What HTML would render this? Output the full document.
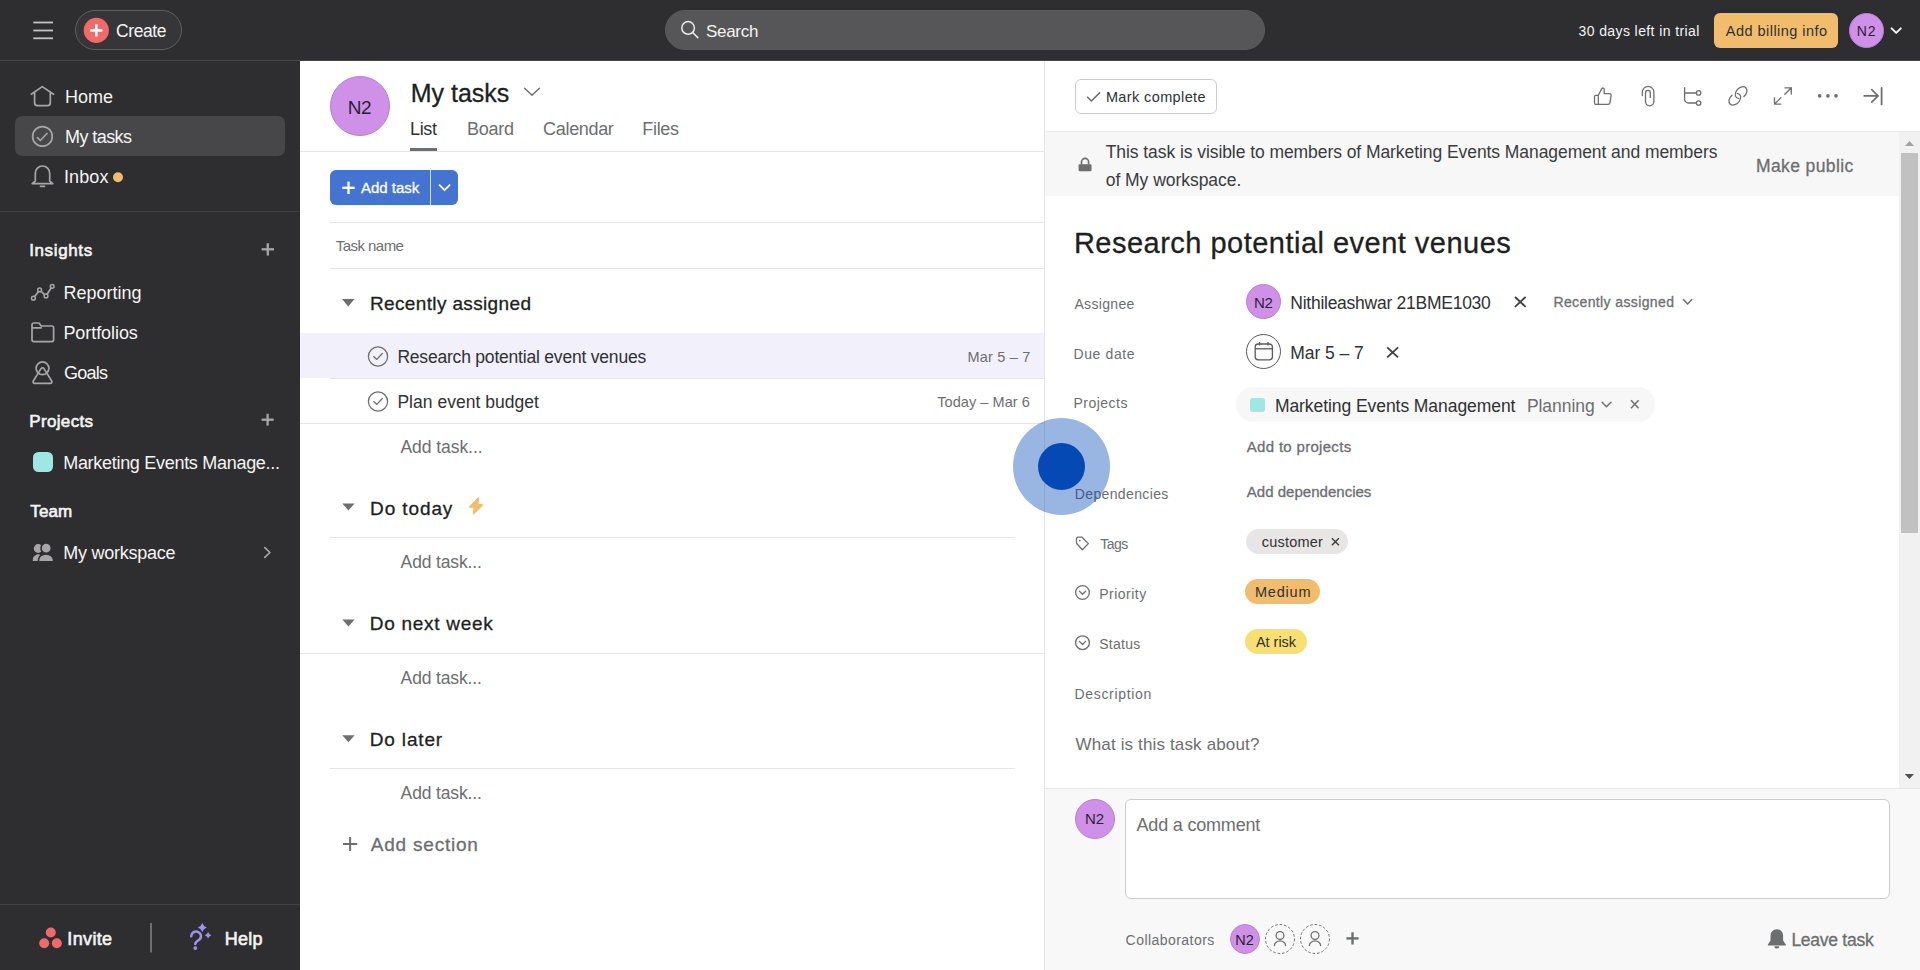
<!DOCTYPE html>
<html><head><meta charset="utf-8">
<style>
*{margin:0;padding:0;box-sizing:border-box}
html,body{width:1920px;height:970px;overflow:hidden;background:#fff;font-family:"Liberation Sans",sans-serif;color:#1e1f21}
.a{position:absolute}
.t{position:absolute;white-space:nowrap;height:30px;line-height:30px}
svg.s{position:absolute;left:0;top:0;overflow:visible}
</style></head><body>
<!-- backgrounds -->
<div class="a" style="left:0;top:0;width:1920px;height:60px;background:#2e2e30"></div>
<div class="a" style="left:0;top:60px;width:1920px;height:1px;background:#48484a"></div>
<div class="a" style="left:0;top:61px;width:300px;height:909px;background:#2e2e30"></div>
<div class="a" style="left:15px;top:116px;width:270px;height:40px;border-radius:7px;background:#474749"></div>
<div class="a" style="left:0;top:210.5px;width:300px;height:1px;background:#434345"></div>
<div class="a" style="left:32.6px;top:451.7px;width:20.7px;height:20.5px;border-radius:5.5px;background:#9ee7e3"></div>
<div class="a" style="left:0;top:904px;width:300px;height:1px;background:#434345"></div>

<!-- top bar shapes -->
<div class="a" style="left:75px;top:10px;width:107px;height:40px;border-radius:20px;border:1px solid #5f5f61;background:#363638"></div>
<div class="a" style="left:665px;top:10px;width:600px;height:40px;border-radius:20px;background:#565557;border:1px solid #5b5b5d"></div>
<div class="a" style="left:1714px;top:13px;width:124px;height:35px;border-radius:6px;background:#f1bd6c"></div>
<div class="a" style="left:1849px;top:13px;width:35px;height:35px;border-radius:50%;background:#cf91e8;border:1px solid #b980d2"></div>

<!-- list pane shapes -->
<div class="a" style="left:330px;top:76px;width:60px;height:60px;border-radius:50%;background:#cf91e8;border:1px solid #b57ccf"></div>
<div class="a" style="left:410px;top:148px;width:27px;height:3px;background:#6d6e6f"></div>
<div class="a" style="left:300px;top:151px;width:744px;height:1px;background:#e6e6e6"></div>
<div class="a" style="left:330px;top:170px;width:128px;height:35px;border-radius:6px;background:#4573d2"></div>
<div class="a" style="left:430px;top:170px;width:1px;height:35px;background:#d5def3"></div>
<div class="a" style="left:330px;top:222px;width:714px;height:1px;background:#e6e6e6"></div>
<div class="a" style="left:330px;top:268px;width:714px;height:1px;background:#e6e6e6"></div>
<div class="a" style="left:300px;top:333px;width:744px;height:45px;background:#f1f0fb"></div>
<div class="a" style="left:330px;top:378px;width:714px;height:1px;background:#e6e6e6"></div>
<div class="a" style="left:300px;top:423px;width:744px;height:1px;background:#e6e6e6"></div>
<div class="a" style="left:330px;top:537px;width:685px;height:1px;background:#e6e6e6"></div>
<div class="a" style="left:300px;top:653px;width:744px;height:1px;background:#e6e6e6"></div>
<div class="a" style="left:330px;top:768px;width:685px;height:1px;background:#e6e6e6"></div>

<!-- detail pane shapes -->
<div class="a" style="left:1044px;top:61px;width:1px;height:909px;background:#e6e6e6"></div>
<div class="a" style="left:1075px;top:79px;width:142px;height:35px;border-radius:6px;border:1px solid #cfcbcb"></div>
<div class="a" style="left:1045px;top:131px;width:875px;height:1px;background:#e6e6e6"></div>
<div class="a" style="left:1045px;top:132px;width:854px;height:64px;background:#f7f7f7"></div>
<div class="a" style="left:1899px;top:132px;width:21px;height:656px;background:#f1f1f1"></div>
<div class="a" style="left:1901px;top:153px;width:17px;height:380px;background:#c1c1c1"></div>
<div class="a" style="left:1246px;top:284px;width:35px;height:35px;border-radius:50%;background:#cf91e8;border:1px solid #b980d2"></div>
<div class="a" style="left:1246px;top:334px;width:35px;height:35px;border-radius:50%;border:1px solid #58595b"></div>
<div class="a" style="left:1235.5px;top:387px;width:419px;height:34.5px;border-radius:17px;background:#f7f7f7"></div>
<div class="a" style="left:1250px;top:397.5px;width:15px;height:14.5px;border-radius:3px;background:#9ee7e3"></div>
<div class="a" style="left:1246px;top:529px;width:101.5px;height:25px;border-radius:12.5px;background:#e8e5e5"></div>
<div class="a" style="left:1245px;top:579.3px;width:75px;height:24.5px;border-radius:12.5px;background:#f1bd6c"></div>
<div class="a" style="left:1245px;top:629.2px;width:62px;height:24.5px;border-radius:12.5px;background:#f8df72"></div>
<div class="a" style="left:1045px;top:788px;width:875px;height:1px;background:#e6e6e6"></div>
<div class="a" style="left:1045px;top:789px;width:875px;height:181px;background:#f8f8f8"></div>
<div class="a" style="left:1075px;top:799px;width:40px;height:40px;border-radius:50%;background:#cf91e8;border:1px solid #b980d2"></div>
<div class="a" style="left:1125px;top:799px;width:765px;height:100px;border-radius:6px;border:1px solid #cfcbcb;background:#fff"></div>
<div class="a" style="left:1230px;top:924px;width:30px;height:30px;border-radius:50%;background:#cf91e8;border:1px solid #b980d2"></div>

<div class="t" id="create" style="left:116.00px;top:16.01px;font-size:17.5px;color:#f5f4f3;letter-spacing:-0.400px">Create</div>
<div class="t" id="search" style="left:705.91px;top:16.90px;font-size:17px;color:#f5f4f3;letter-spacing:-0.260px">Search</div>
<div class="t" id="trial" style="left:1578.50px;top:16.00px;font-size:14px;color:#f5f4f3;letter-spacing:0.400px">30 days left in trial</div>
<div class="t" id="billing" style="left:1725.81px;top:16.01px;font-size:14.5px;color:#303133;letter-spacing:0.467px">Add billing info</div>
<div class="t" id="avtop" style="left:1856.81px;top:16.00px;font-size:14px;color:#2a1f33;letter-spacing:0.800px">N2</div>
<div class="t" id="home" style="left:65.00px;top:82.22px;font-size:18px;color:#f5f4f3;letter-spacing:0.000px">Home</div>
<div class="t" id="mytasks" style="left:65.00px;top:121.51px;font-size:18px;color:#f5f4f3;letter-spacing:-0.571px">My tasks</div>
<div class="t" id="inbox" style="left:64.00px;top:161.90px;font-size:18px;color:#f5f4f3;letter-spacing:0.100px">Inbox</div>
<div class="t" id="insights" style="left:29.20px;top:236.41px;font-size:17px;font-weight:normal;-webkit-text-stroke:0.6px currentColor;color:#f5f4f3;letter-spacing:0.629px">Insights</div>
<div class="t" id="reporting" style="left:63.41px;top:277.51px;font-size:18px;color:#f5f4f3;letter-spacing:0.000px">Reporting</div>
<div class="t" id="portfolios" style="left:63.41px;top:318.01px;font-size:18px;color:#f5f4f3;letter-spacing:-0.067px">Portfolios</div>
<div class="t" id="goals" style="left:63.91px;top:358.31px;font-size:18px;color:#f5f4f3;letter-spacing:-0.725px">Goals</div>
<div class="t" id="projects" style="left:29.20px;top:407.20px;font-size:17px;font-weight:normal;-webkit-text-stroke:0.6px currentColor;color:#f5f4f3;letter-spacing:0.357px">Projects</div>
<div class="t" id="mem" style="left:63.20px;top:447.72px;font-size:18px;color:#f5f4f3;letter-spacing:-0.292px">Marketing Events Manage...</div>
<div class="t" id="team" style="left:30.31px;top:496.51px;font-size:17px;font-weight:normal;-webkit-text-stroke:0.6px currentColor;color:#f5f4f3;letter-spacing:0.100px">Team</div>
<div class="t" id="workspace" style="left:63.20px;top:537.61px;font-size:18px;color:#f5f4f3;letter-spacing:-0.255px">My workspace</div>
<div class="t" id="invite" style="left:67.31px;top:924.01px;font-size:18px;font-weight:normal;-webkit-text-stroke:0.6px currentColor;color:#f5f4f3;letter-spacing:0.360px">Invite</div>
<div class="t" id="help" style="left:224.81px;top:924.01px;font-size:18px;font-weight:normal;-webkit-text-stroke:0.6px currentColor;color:#f5f4f3;letter-spacing:0.267px">Help</div>
<div class="t" id="avbig" style="left:347.81px;top:92.71px;font-size:19px;color:#2a1f33;letter-spacing:-0.400px">N2</div>
<div class="t" id="title" style="left:410.70px;top:78.00px;font-size:25px;font-weight:normal;-webkit-text-stroke:0.3px currentColor;color:#1e1f21;letter-spacing:0.000px">My tasks</div>
<div class="t" id="tlist" style="left:410.00px;top:114.01px;font-size:18px;color:#303133;letter-spacing:-0.333px">List</div>
<div class="t" id="tboard" style="left:467.00px;top:114.01px;font-size:18px;color:#6d6e6f;letter-spacing:-0.250px">Board</div>
<div class="t" id="tcal" style="left:543.11px;top:114.01px;font-size:18px;color:#6d6e6f;letter-spacing:-0.329px">Calendar</div>
<div class="t" id="tfiles" style="left:642.31px;top:114.01px;font-size:18px;color:#6d6e6f;letter-spacing:-0.325px">Files</div>
<div class="t" id="addbtn" style="left:361.00px;top:173.00px;font-size:15px;font-weight:normal;-webkit-text-stroke:0.3px currentColor;color:#ffffff;letter-spacing:0.000px">Add task</div>
<div class="t" id="taskname" style="left:335.81px;top:231.10px;font-size:15px;color:#6d6e6f;letter-spacing:-0.550px">Task name</div>
<div class="t" id="sec1" style="left:370.00px;top:288.51px;font-size:19px;font-weight:normal;-webkit-text-stroke:0.3px currentColor;color:#1e1f21;letter-spacing:0.356px">Recently assigned</div>
<div class="t" id="row1" style="left:397.41px;top:341.80px;font-size:17.5px;color:#303133;letter-spacing:-0.203px">Research potential event venues</div>
<div class="t" id="date1" style="left:967.61px;top:341.81px;font-size:14.5px;color:#6d6e6f;letter-spacing:0.175px">Mar 5 – 7</div>
<div class="t" id="row2" style="left:397.41px;top:387.01px;font-size:17.5px;color:#303133;letter-spacing:0.025px">Plan event budget</div>
<div class="t" id="date2" style="left:937.31px;top:386.61px;font-size:14.5px;color:#6d6e6f;letter-spacing:0.058px">Today – Mar 6</div>
<div class="t" id="at1" style="left:400.50px;top:432.01px;font-size:17.5px;color:#6d6e6f;letter-spacing:-0.060px">Add task...</div>
<div class="t" id="sec2" style="left:370.11px;top:493.71px;font-size:19px;font-weight:normal;-webkit-text-stroke:0.3px currentColor;color:#1e1f21;letter-spacing:0.886px">Do today</div>
<div class="t" id="at2" style="left:400.61px;top:547.01px;font-size:17.5px;color:#6d6e6f;letter-spacing:-0.140px">Add task...</div>
<div class="t" id="sec3" style="left:369.81px;top:608.51px;font-size:19px;font-weight:normal;-webkit-text-stroke:0.3px currentColor;color:#1e1f21;letter-spacing:0.709px">Do next week</div>
<div class="t" id="at3" style="left:400.61px;top:662.51px;font-size:17.5px;color:#6d6e6f;letter-spacing:-0.140px">Add task...</div>
<div class="t" id="sec4" style="left:369.81px;top:725.01px;font-size:19px;font-weight:normal;-webkit-text-stroke:0.3px currentColor;color:#1e1f21;letter-spacing:0.829px">Do later</div>
<div class="t" id="at4" style="left:400.61px;top:778.30px;font-size:17.5px;color:#6d6e6f;letter-spacing:-0.140px">Add task...</div>
<div class="t" id="addsec" style="left:370.81px;top:829.71px;font-size:19px;font-weight:normal;-webkit-text-stroke:0.3px currentColor;color:#6d6e6f;letter-spacing:0.780px">Add section</div>
<div class="t" id="markc" style="left:1105.91px;top:81.90px;font-size:14.5px;color:#303133;letter-spacing:0.383px">Mark complete</div>
<div class="t" id="ban1" style="left:1105.70px;top:137.01px;font-size:17.5px;color:#3a3b3d;letter-spacing:-0.067px">This task is visible to members of Marketing Events Management and members</div>
<div class="t" id="ban2" style="left:1105.70px;top:164.80px;font-size:17.5px;color:#3a3b3d;letter-spacing:-0.033px">of My workspace.</div>
<div class="t" id="makepub" style="left:1755.91px;top:150.71px;font-size:17.5px;font-weight:normal;-webkit-text-stroke:0.3px currentColor;color:#6d6e6f;letter-spacing:0.400px">Make public</div>
<div class="t" id="dtitle" style="left:1073.91px;top:228.01px;font-size:29px;font-weight:normal;-webkit-text-stroke:0.3px currentColor;color:#1e1f21;letter-spacing:0.483px">Research potential event venues</div>
<div class="t" id="lassignee" style="left:1074.41px;top:288.91px;font-size:14px;color:#6d6e6f;letter-spacing:0.343px">Assignee</div>
<div class="t" id="avassign" style="left:1253.90px;top:287.81px;font-size:15px;color:#2a1f33;letter-spacing:-0.200px">N2</div>
<div class="t" id="aname" style="left:1290.31px;top:287.71px;font-size:17.5px;color:#303133;letter-spacing:-0.259px">Nithileashwar 21BME1030</div>
<div class="t" id="recent" style="left:1553.41px;top:286.91px;font-size:14px;font-weight:normal;-webkit-text-stroke:0.3px currentColor;color:#6d6e6f;letter-spacing:0.387px">Recently assigned</div>
<div class="t" id="ldue" style="left:1073.41px;top:338.60px;font-size:14px;color:#6d6e6f;letter-spacing:0.629px">Due date</div>
<div class="t" id="due" style="left:1290.31px;top:337.80px;font-size:17.5px;color:#303133;letter-spacing:-0.075px">Mar 5 – 7</div>
<div class="t" id="lproj" style="left:1073.41px;top:388.41px;font-size:14px;color:#6d6e6f;letter-spacing:0.486px">Projects</div>
<div class="t" id="proj" style="left:1274.91px;top:390.80px;font-size:17.5px;color:#303133;letter-spacing:-0.065px">Marketing Events Management</div>
<div class="t" id="planning" style="left:1526.91px;top:390.80px;font-size:17.5px;color:#6d6e6f;letter-spacing:-0.057px">Planning</div>
<div class="t" id="addproj" style="left:1246.81px;top:432.10px;font-size:15px;font-weight:normal;-webkit-text-stroke:0.3px currentColor;color:#6d6e6f;letter-spacing:0.307px">Add to projects</div>
<div class="t" id="ldep" style="left:1074.81px;top:479.00px;font-size:14px;color:#6d6e6f;letter-spacing:0.364px">Dependencies</div>
<div class="t" id="adddep" style="left:1246.81px;top:476.91px;font-size:15px;font-weight:normal;-webkit-text-stroke:0.3px currentColor;color:#6d6e6f;letter-spacing:0.020px">Add dependencies</div>
<div class="t" id="ltags" style="left:1100.20px;top:528.71px;font-size:14px;color:#6d6e6f;letter-spacing:-0.467px">Tags</div>
<div class="t" id="customer" style="left:1261.81px;top:527.31px;font-size:14.5px;color:#303133;letter-spacing:0.186px">customer</div>
<div class="t" id="lprio" style="left:1099.20px;top:578.60px;font-size:14px;color:#6d6e6f;letter-spacing:0.486px">Priority</div>
<div class="t" id="medium" style="left:1254.91px;top:576.90px;font-size:14.5px;color:#303133;letter-spacing:0.820px">Medium</div>
<div class="t" id="lstatus" style="left:1099.20px;top:628.60px;font-size:14px;color:#6d6e6f;letter-spacing:0.280px">Status</div>
<div class="t" id="atrisk" style="left:1255.91px;top:626.81px;font-size:14.5px;color:#303133;letter-spacing:-0.017px">At risk</div>
<div class="t" id="ldesc" style="left:1074.50px;top:678.60px;font-size:14px;color:#6d6e6f;letter-spacing:0.670px">Description</div>
<div class="t" id="whatis" style="left:1075.50px;top:729.61px;font-size:17px;color:#6d6e6f;letter-spacing:0.148px">What is this task about?</div>
<div class="t" id="avcomment" style="left:1085.00px;top:804.41px;font-size:15px;color:#2a1f33;letter-spacing:0.000px">N2</div>
<div class="t" id="addcomment" style="left:1136.50px;top:809.61px;font-size:18px;color:#6d6e6f;letter-spacing:-0.187px">Add a comment</div>
<div class="t" id="collab" style="left:1125.61px;top:924.50px;font-size:14px;color:#6d6e6f;letter-spacing:0.450px">Collaborators</div>
<div class="t" id="avcollab" style="left:1235.20px;top:924.50px;font-size:14.5px;color:#2a1f33;letter-spacing:0.000px">N2</div>
<div class="t" id="leave" style="left:1791.41px;top:924.91px;font-size:17.5px;font-weight:normal;-webkit-text-stroke:0.3px currentColor;color:#6d6e6f;letter-spacing:-0.267px">Leave task</div>

<svg class="s" width="1920" height="970" viewBox="0 0 1920 970">
 <!-- hamburger -->
 <g stroke="#c4c4c4" stroke-width="1.8" stroke-linecap="butt"><line x1="33.3" y1="22.5" x2="53" y2="22.5"/><line x1="33.3" y1="30.5" x2="53" y2="30.5"/><line x1="33.3" y1="38.3" x2="53" y2="38.3"/></g>
 <!-- create plus -->
 <circle cx="96.3" cy="30.4" r="12.6" fill="#f06a6a"/>
 <g stroke="#fff" stroke-width="2.6"><line x1="96.3" y1="24.3" x2="96.3" y2="36.5"/><line x1="90.2" y1="30.4" x2="102.4" y2="30.4"/></g>
 <!-- search icon -->
 <g stroke="#ececec" stroke-width="1.5" fill="none" stroke-linecap="round"><circle cx="688.1" cy="27.9" r="6.3"/><line x1="692.7" y1="32.5" x2="697.8" y2="37.6"/></g>
 <!-- top chevron -->
 <polyline points="1891.6,28.4 1896.2,32.9 1900.8,28.4" stroke="#f5f4f3" stroke-width="2" fill="none" stroke-linecap="round" stroke-linejoin="round"/>

 <!-- sidebar icons -->
 <g stroke="#a7a5a7" stroke-width="1.7" fill="none" stroke-linecap="round" stroke-linejoin="round">
  <path d="M31.3 94.2 L42.2 86.6 L53.6 94.2 M34.6 91.8 V102.7 a3 3 0 0 0 3 3 H47.3 a3 3 0 0 0 3 -3 V91.8"/>
  <circle cx="42.45" cy="136.4" r="9.8"/>
  <polyline points="37.4,137.7 40.3,140.5 47,133.5"/>
  <path d="M35.3 181 V173.5 a7.2 7.5 0 0 1 14.4 0 V181 L52.8 183.6 H32.2 Z"/>
  <path d="M40.5 186.3 H44.5"/>
  <path d="M34.5 296.7 L38.5 291.4 M41 291.3 L44.6 294.7 M47.1 294.3 L51.1 288"/>
  <path d="M32 324.8 a1.8 1.8 0 0 1 1.8 -1.8 H39 L41.2 326 H51.8 a1.8 1.8 0 0 1 1.8 1.8 V339.8 a1.8 1.8 0 0 1 -1.8 1.8 H33.8 a1.8 1.8 0 0 1 -1.8 -1.8 Z M32 327.8 H41.2"/>
  <circle cx="42.5" cy="368.3" r="6.4"/>
  <path d="M41 368.6 a1.8 1.8 0 0 1 3 0 L51.7 381 a1.5 1.5 0 0 1 -1.3 2.3 H34.6 a1.5 1.5 0 0 1 -1.3 -2.3 Z"/>
 </g>
 <g stroke="#a7a5a7" stroke-width="1.5" fill="#2e2e30"><circle cx="33.4" cy="298.2" r="1.9"/><circle cx="39.6" cy="289.9" r="1.9"/><circle cx="46" cy="296" r="1.9"/><circle cx="52.2" cy="286.3" r="1.9"/></g>
 <g stroke="#a7a5a7" stroke-width="2.3" stroke-linecap="butt"><line x1="267.8" y1="243.2" x2="267.8" y2="255.5"/><line x1="261.6" y1="249.3" x2="274" y2="249.3"/><line x1="267.6" y1="413.8" x2="267.6" y2="425.6"/><line x1="261.6" y1="419.7" x2="273.7" y2="419.7"/></g>
 <!-- workspace icon -->
 <g fill="#a7a5a7">
  <circle cx="38.2" cy="548.5" r="4.4"/>
  <path d="M32.8 561 V559 a6 5 0 0 1 7 -4.6 V561 Z"/>
 </g>
 <g fill="#a7a5a7" stroke="#2e2e30" stroke-width="1.6">
  <circle cx="46.2" cy="548.2" r="5.2"/>
  <path d="M38.5 561.8 V560 a7.3 6 0 0 1 15 0 V561.8 Z"/>
 </g>
 <polyline points="264.8,547.6 269.9,552.5 264.8,557.4" stroke="#a7a5a7" stroke-width="1.7" fill="none" stroke-linecap="round" stroke-linejoin="round"/>
 <circle cx="118" cy="177.2" r="5" fill="#f1bd6c"/>
 <!-- invite / help -->
 <g fill="#f06a6a"><circle cx="50.8" cy="932.5" r="5"/><circle cx="44.2" cy="943.3" r="5"/><circle cx="56.8" cy="943.3" r="5"/></g>
 <rect x="150" y="923" width="2" height="29.5" fill="#6f6f71"/>
 <g fill="none" stroke="#9f92f2" stroke-width="2.5" stroke-linecap="round"><path d="M191.2 936.2 a4.9 4.6 0 1 1 8.6 3 c-1.7 1.4 -4.5 2.6 -4.5 4.7"/></g>
 <g fill="#9f92f2"><circle cx="195.3" cy="948.1" r="1.9"/>
  <path d="M202.3 923 Q203.4 926.4 206.8 927.5 Q203.4 928.6 202.3 932 Q201.2 928.6 197.8 927.5 Q201.2 926.4 202.3 923 Z"/>
  <path d="M208.1 931.9 Q208.9 934.4 211.4 935.2 Q208.9 936 208.1 938.5 Q207.3 936 204.8 935.2 Q207.3 934.4 208.1 931.9 Z"/>
 </g>

 <!-- list pane icons -->
 <polyline points="524.6,88.2 532,95.2 539.4,88.2" stroke="#6d6e6f" stroke-width="1.5" fill="none" stroke-linecap="round" stroke-linejoin="round"/>
 <g stroke="#fff" stroke-width="2.3"><line x1="348.5" y1="181.6" x2="348.5" y2="194"/><line x1="342.3" y1="187.8" x2="354.7" y2="187.8"/></g>
 <polyline points="439.6,185.2 444.6,190.2 449.6,185.2" stroke="#fff" stroke-width="1.8" fill="none" stroke-linecap="round" stroke-linejoin="round"/>
 <g fill="#6d6e6f">
  <polygon points="342,299 354.5,299 348.25,306.5"/>
  <polygon points="342.3,503.4 354.6,503.4 348.45,510.4"/>
  <polygon points="342.3,619.6 354.6,619.6 348.45,626.6"/>
  <polygon points="342.3,735.2 354.6,735.2 348.45,742.2"/>
 </g>
 <g stroke="#6d6e6f" stroke-width="1.3" fill="none" stroke-linecap="round" stroke-linejoin="round">
  <circle cx="378" cy="356.5" r="9.6"/><polyline points="373.7,356.6 376.8,359.4 382.3,353.5"/>
  <circle cx="378" cy="401.5" r="9.6"/><polyline points="373.7,401.6 376.8,404.4 382.3,398.5"/>
 </g>
 <path d="M478.4 498 L469.9 506.8 L474.4 507.2 L473.6 513.4 L482.2 505.2 L477.6 504.6 Z" fill="#f1bd6c" stroke="#f1bd6c" stroke-width="1.7" stroke-linejoin="round"/>
 <g stroke="#6d6e6f" stroke-width="2"><line x1="350.1" y1="837" x2="350.1" y2="851"/><line x1="343" y1="844" x2="357.2" y2="844"/></g>

 <!-- detail header icons -->
 <polyline points="1087.6,97.2 1091.4,101 1099.6,92.9" stroke="#6d6e6f" stroke-width="1.6" fill="none" stroke-linecap="round" stroke-linejoin="round"/>
 <g stroke="#6d6e6f" stroke-width="1.3" fill="none" stroke-linecap="round" stroke-linejoin="round">
  <path d="M1598.3 95.3 H1595.7 a1.2 1.2 0 0 0 -1.2 1.2 V103.1 a1.2 1.2 0 0 0 1.2 1.2 H1598.3 Z"/>
  <path d="M1598.3 95.3 L1601.8 88.6 a1.3 1.3 0 0 1 2.4 0.6 V93.6 H1609.4 a1.7 1.7 0 0 1 1.7 1.9 L1610 102.6 a1.9 1.9 0 0 1 -1.9 1.7 H1598.3"/>
  <path d="M1642.3 95.5 V92.2 a5.8 5.8 0 0 1 11.6 0 V101.6 a4.2 4.2 0 0 1 -8.4 0 V92.8 a2.4 2.4 0 0 1 4.8 0 V97.4"/>
  <path d="M1684.6 87.6 V99.2 a3.8 3.8 0 0 0 3.8 3.8 H1696.4 M1684.6 93 H1696.4"/>
  <circle cx="1698.6" cy="92.9" r="2.2"/><circle cx="1698.6" cy="103" r="2.2"/>
  <path d="M1785 87.8 H1791.3 V94.1 M1791.3 87.8 L1784.8 94.3 M1774.5 97.8 V104.1 H1780.8 M1774.5 104.1 L1781 97.6"/>
 </g>
 <g stroke="#6d6e6f" stroke-width="1.3" fill="none" stroke-linecap="round">
  <path d="M1738.63 98.46 A6.8 4.8 -45 1 1 1743.88 96.55"/>
  <path d="M1737.27 93.34 A6.8 4.8 -45 1 1 1732.02 95.25"/>
 </g>
 <path d="M1864.2 95.9 H1878.2 M1871.8 89.7 L1878 95.9 L1871.8 102.2" stroke="#6d6e6f" stroke-width="1.7" fill="none" stroke-linecap="round" stroke-linejoin="round"/>
 <line x1="1881.6" y1="88" x2="1881.6" y2="104.4" stroke="#6d6e6f" stroke-width="1.8" stroke-linecap="round"/>
 <g fill="#6d6e6f"><circle cx="1819.7" cy="95.9" r="1.8"/><circle cx="1827.9" cy="95.9" r="1.8"/><circle cx="1836" cy="95.9" r="1.8"/></g>
 <!-- lock -->
 <path d="M1081.5 164.5 V162 a3.55 3.55 0 0 1 7.1 0 V164.5" stroke="#6d6e6f" stroke-width="1.7" fill="none"/>
 <rect x="1078.6" y="164.3" width="12.9" height="7" rx="1" fill="#6d6e6f"/>
 <!-- scroll arrows -->
 <polygon points="1905,146 1914,146 1909.5,141" fill="#a3a3a3"/>
 <polygon points="1904.8,774 1914,774 1909.4,779" fill="#505050"/>
 <!-- assignee X -->
 <g stroke="#3d3e40" stroke-width="1.8"><line x1="1515" y1="297" x2="1525.6" y2="306.8"/><line x1="1525.6" y1="297" x2="1515" y2="306.8"/>
  <line x1="1387.2" y1="347.3" x2="1398.1" y2="357.3"/><line x1="1398.1" y1="347.3" x2="1387.2" y2="357.3"/></g>
 <polyline points="1683.4,299.5 1687.6,303.9 1691.8,299.5" stroke="#6d6e6f" stroke-width="1.5" fill="none" stroke-linecap="round" stroke-linejoin="round"/>
 <!-- calendar icon -->
 <g stroke="#58595b" stroke-width="1.3" fill="none">
  <rect x="1255.2" y="344" width="17.2" height="15.8" rx="3"/>
  <line x1="1255.2" y1="348.8" x2="1272.4" y2="348.8"/>
  <line x1="1259.6" y1="342" x2="1259.6" y2="345.5"/><line x1="1268" y1="342" x2="1268" y2="345.5"/>
 </g>
 <polyline points="1602.1,402.2 1606.5,406.8 1610.9,402.2" stroke="#6d6e6f" stroke-width="1.5" fill="none" stroke-linecap="round" stroke-linejoin="round"/>
 <g stroke="#6d6e6f" stroke-width="1.5"><line x1="1631" y1="400.3" x2="1638.6" y2="408.3"/><line x1="1638.6" y1="400.3" x2="1631" y2="408.3"/></g>
 <!-- tag icon -->
 <path d="M1076.5 538.8 a1.6 1.6 0 0 1 1.6 -1.6 H1082 L1088.4 543.6 L1082.3 549.7 L1076.5 543.2 Z" stroke="#6d6e6f" stroke-width="1.3" fill="none" stroke-linejoin="round"/>
 <circle cx="1079.8" cy="540.6" r="0.9" fill="#6d6e6f"/>
 <g stroke="#3d3e40" stroke-width="1.4"><line x1="1331.9" y1="538.3" x2="1338.9" y2="545.3"/><line x1="1338.9" y1="538.3" x2="1331.9" y2="545.3"/></g>
 <g stroke="#6d6e6f" stroke-width="1.3" fill="none" stroke-linecap="round" stroke-linejoin="round">
  <circle cx="1082.5" cy="592.5" r="6.9"/><polyline points="1079.4,591.2 1082.5,594.3 1085.6,591.2"/>
  <circle cx="1082.5" cy="642.7" r="6.9"/><polyline points="1079.4,641.4 1082.5,644.5 1085.6,641.4"/>
 </g>
 <!-- collaborators -->
 <g stroke="#6d6e6f" stroke-width="1" fill="none" stroke-dasharray="2.6 1.9"><circle cx="1280" cy="939" r="14.5"/><circle cx="1315" cy="939" r="14.5"/></g>
 <g stroke="#6d6e6f" stroke-width="1.3" fill="none" stroke-linecap="round">
  <circle cx="1280" cy="935.5" r="3.9"/><path d="M1274.4 945.6 a5.6 4.8 0 0 1 11.2 0"/>
  <circle cx="1315" cy="935.5" r="3.9"/><path d="M1309.4 945.6 a5.6 4.8 0 0 1 11.2 0"/>
 </g>
 <g stroke="#6d6e6f" stroke-width="2.4"><line x1="1352.5" y1="932.3" x2="1352.5" y2="944.5"/><line x1="1346.4" y1="938.4" x2="1358.6" y2="938.4"/></g>
 <path d="M1776.8 929.2 a6.3 6.3 0 0 0 -6.3 6.3 V940.6 L1767.9 944.4 a0.8 0.8 0 0 0 0.7 1.2 H1785.1 a0.8 0.8 0 0 0 0.7 -1.2 L1783.1 940.6 V935.5 a6.3 6.3 0 0 0 -6.3 -6.3 Z" fill="#6d6e6f"/>
 <path d="M1774.3 946.2 H1779.4 a2.55 2.4 0 0 1 -5.1 0 Z" fill="#6d6e6f"/>
</svg>

<!-- click indicator -->
<div class="a" style="left:1013px;top:418px;width:97px;height:97px;border-radius:50%;background:rgba(0,71,180,0.4)"></div>
<div class="a" style="left:1038px;top:443px;width:47px;height:47px;border-radius:50%;background:#0449b4"></div>
</body></html>
